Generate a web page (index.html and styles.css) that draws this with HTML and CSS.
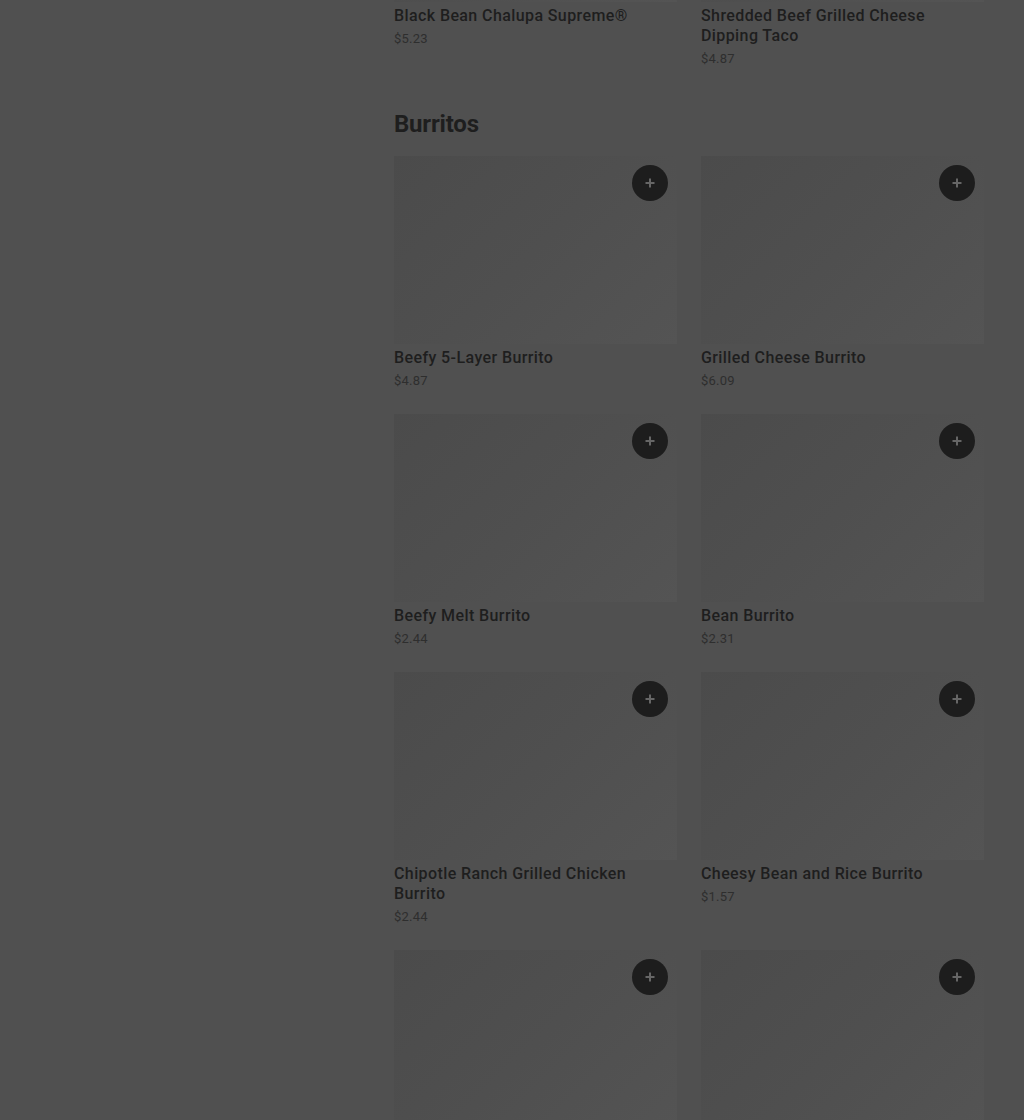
FILE: index.html
```html
<!DOCTYPE html>
<html lang="en">
<head>
    <meta charset="UTF-8">
    <meta name="viewport" content="width=device-width, initial-scale=1.0">
    <title>Menu</title>
    <link rel="stylesheet" href="styles.css">
</head>
<body>
    <div class="layout">
        <aside class="sidebar"></aside>

        <main class="menu">
            <section class="category">
                <div class="grid">
                    <div class="item">
                        <div class="item-image">
                            <button class="add-button" aria-label="Add">
                                <svg width="12" height="12" viewBox="0 0 12 12"><path d="M6 1.5v9M1.5 6h9" stroke="currentColor" stroke-width="2"/></svg>
                            </button>
                        </div>
                        <div class="item-name">Black Bean Chalupa Supreme®</div>
                        <div class="item-price">$5.23</div>
                    </div>
                    <div class="item">
                        <div class="item-image">
                            <button class="add-button" aria-label="Add">
                                <svg width="12" height="12" viewBox="0 0 12 12"><path d="M6 1.5v9M1.5 6h9" stroke="currentColor" stroke-width="2"/></svg>
                            </button>
                        </div>
                        <div class="item-name">Shredded Beef Grilled Cheese Dipping Taco</div>
                        <div class="item-price">$4.87</div>
                    </div>
                </div>
            </section>

            <section class="category">
                <h2>Burritos</h2>
                <div class="grid">
                    <div class="item">
                        <div class="item-image">
                            <button class="add-button" aria-label="Add">
                                <svg width="12" height="12" viewBox="0 0 12 12"><path d="M6 1.5v9M1.5 6h9" stroke="currentColor" stroke-width="2"/></svg>
                            </button>
                        </div>
                        <div class="item-name">Beefy 5-Layer Burrito</div>
                        <div class="item-price">$4.87</div>
                    </div>
                    <div class="item">
                        <div class="item-image">
                            <button class="add-button" aria-label="Add">
                                <svg width="12" height="12" viewBox="0 0 12 12"><path d="M6 1.5v9M1.5 6h9" stroke="currentColor" stroke-width="2"/></svg>
                            </button>
                        </div>
                        <div class="item-name">Grilled Cheese Burrito</div>
                        <div class="item-price">$6.09</div>
                    </div>
                    <div class="item">
                        <div class="item-image">
                            <button class="add-button" aria-label="Add">
                                <svg width="12" height="12" viewBox="0 0 12 12"><path d="M6 1.5v9M1.5 6h9" stroke="currentColor" stroke-width="2"/></svg>
                            </button>
                        </div>
                        <div class="item-name">Beefy Melt Burrito</div>
                        <div class="item-price">$2.44</div>
                    </div>
                    <div class="item">
                        <div class="item-image">
                            <button class="add-button" aria-label="Add">
                                <svg width="12" height="12" viewBox="0 0 12 12"><path d="M6 1.5v9M1.5 6h9" stroke="currentColor" stroke-width="2"/></svg>
                            </button>
                        </div>
                        <div class="item-name">Bean Burrito</div>
                        <div class="item-price">$2.31</div>
                    </div>
                    <div class="item">
                        <div class="item-image">
                            <button class="add-button" aria-label="Add">
                                <svg width="12" height="12" viewBox="0 0 12 12"><path d="M6 1.5v9M1.5 6h9" stroke="currentColor" stroke-width="2"/></svg>
                            </button>
                        </div>
                        <div class="item-name">Chipotle Ranch Grilled Chicken Burrito</div>
                        <div class="item-price">$2.44</div>
                    </div>
                    <div class="item">
                        <div class="item-image">
                            <button class="add-button" aria-label="Add">
                                <svg width="12" height="12" viewBox="0 0 12 12"><path d="M6 1.5v9M1.5 6h9" stroke="currentColor" stroke-width="2"/></svg>
                            </button>
                        </div>
                        <div class="item-name">Cheesy Bean and Rice Burrito</div>
                        <div class="item-price">$1.57</div>
                    </div>
                    <div class="item">
                        <div class="item-image">
                            <button class="add-button" aria-label="Add">
                                <svg width="12" height="12" viewBox="0 0 12 12"><path d="M6 1.5v9M1.5 6h9" stroke="currentColor" stroke-width="2"/></svg>
                            </button>
                        </div>
                    </div>
                    <div class="item">
                        <div class="item-image">
                            <button class="add-button" aria-label="Add">
                                <svg width="12" height="12" viewBox="0 0 12 12"><path d="M6 1.5v9M1.5 6h9" stroke="currentColor" stroke-width="2"/></svg>
                            </button>
                        </div>
                    </div>
                </div>
            </section>
        </main>
    </div>
</body>
</html>
```

FILE: styles.css
```css
:root {
    --bg-color: #505050;
    --text-color: #1e1e1e;
    --price-color: #2e2e2e;
    --button-color: #1d1d1d;
}

body {
    font-family: Roboto, 'Liberation Sans', sans-serif;
    background-color: var(--bg-color);
    color: var(--text-color);
    margin: 0;
    height: 1120px;
    overflow: hidden;
}

.layout {
    display: flex;
    padding-right: 40px;
}

.sidebar {
    width: 394px;
    flex-shrink: 0;
}

/* page is scrolled: the first row of cards is cut off at the top */
.menu {
    flex: 1;
    margin-top: -186px;
}

.category h2 {
    font-size: 24px;
    line-height: 32px;
    font-weight: 700;
    margin: 39px 0 16px;
    letter-spacing: -0.2px;
}

.grid {
    display: grid;
    grid-template-columns: 1fr 1fr;
    column-gap: 24px;
    row-gap: 23px;
}

.item-image {
    position: relative;
    height: 188px;
    background: linear-gradient(135deg, #4b4b4b 0%, #4f4f4f 50%, #545454 100%);
}

.add-button {
    position: absolute;
    top: 9px;
    right: 9px;
    width: 36px;
    height: 36px;
    border-radius: 50%;
    border: none;
    padding: 0;
    background-color: var(--button-color);
    color: #666;
    display: flex;
    align-items: center;
    justify-content: center;
    cursor: pointer;
}

.item-name {
    font-size: 16px;
    line-height: 20px;
    font-weight: 500;
    letter-spacing: 0.4px;
    margin-top: 4px;
    padding-right: 30px;
}

.item-price {
    font-size: 13px;
    line-height: 20px;
    font-weight: 400;
    letter-spacing: 0.2px;
    color: var(--price-color);
    margin-top: 3px;
}
```
